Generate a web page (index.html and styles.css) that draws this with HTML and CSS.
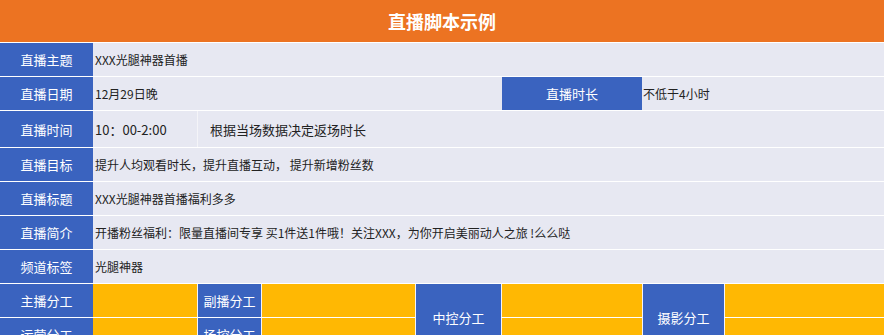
FILE: index.html
```html
<!DOCTYPE html>
<html lang="zh">
<head>
<meta charset="utf-8">
<title>直播脚本示例</title>
<link rel="stylesheet" href="styles.css">
</head>
<body>
<div class="sheet">
  <div class="title">直播脚本示例</div>
  <div class="rows">
    <div class="row">
      <div class="label">直播主题</div>
      <div class="val">XXX光腿神器首播</div>
    </div>
    <div class="row">
      <div class="label">直播日期</div>
      <div class="val w-date">12月29日晚</div>
      <div class="label w-dur">直播时长</div>
      <div class="val flush">不低于4小时</div>
    </div>
    <div class="row tall">
      <div class="label">直播时间</div>
      <div class="val w-time big">10：00-2:00</div>
      <div class="val line big pad">根据当场数据决定返场时长</div>
    </div>
    <div class="row">
      <div class="label">直播目标</div>
      <div class="val">提升人均观看时长，提升直播互动， 提升新增粉丝数</div>
    </div>
    <div class="row">
      <div class="label">直播标题</div>
      <div class="val">XXX光腿神器首播福利多多</div>
    </div>
    <div class="row">
      <div class="label">直播简介</div>
      <div class="val">开播粉丝福利：限量直播间专享 买1件送1件哦！关注XXX，为你开启美丽动人之旅 !么么哒</div>
    </div>
    <div class="row">
      <div class="label">频道标签</div>
      <div class="val">光腿神器</div>
    </div>
    <div class="roles">
      <div class="label">主播分工</div>
      <div class="yel"></div>
      <div class="label line">副播分工</div>
      <div class="yel line"></div>
      <div class="label line span2">中控分工</div>
      <div class="yel line"></div>
      <div class="label line span2">摄影分工</div>
      <div class="yel line"></div>
      <div class="label">运营分工</div>
      <div class="yel"></div>
      <div class="label line">场控分工</div>
      <div class="yel line"></div>
      <div class="yel line"></div>
      <div class="yel line"></div>
    </div>
  </div>
</div>
</body>
</html>
```

FILE: styles.css
```css
html, body {
  margin: 0;
  padding: 0;
  background: #ffffff;
  overflow: hidden;
}

body {
  font-family: "Noto Sans CJK SC", "Noto Sans", sans-serif;
  color: #222222;
}

.sheet {
  width: 884px;
  display: flex;
  flex-direction: column;
  gap: 1px;
}

.title {
  height: 42px;
  background: #ec7322;
  color: #ffffff;
  font-size: 18px;
  font-weight: 700;
  display: flex;
  align-items: center;
  justify-content: center;
}

.rows {
  display: flex;
  flex-direction: column;
  gap: 1px;
}

.row {
  display: flex;
  height: 33px;
}

.row.tall {
  height: 36px;
}

.label {
  box-sizing: border-box;
  width: 93px;
  flex: none;
  background: #3a63bf;
  color: #ffffff;
  font-size: 13px;
  display: flex;
  align-items: center;
  justify-content: center;
}

.val {
  box-sizing: border-box;
  flex: 1;
  min-width: 0;
  background: #e7e8f2;
  font-size: 12px;
  display: flex;
  align-items: center;
  padding-left: 2px;
  white-space: nowrap;
}

.val.big {
  font-size: 13px;
}

.val.pad {
  padding-left: 12px;
}

.val.flush {
  padding-left: 1px;
}

.w-date {
  flex: none;
  width: 409px;
}

.label.w-dur {
  width: 140px;
}

.w-time {
  flex: none;
  width: 104px;
}

.line {
  border-left: 1px solid #f4f4f8;
}

.roles {
  display: grid;
  grid-template-columns: 93px 104px 64px 154px 86px 141px 82px 1fr;
  grid-template-rows: 33px 33px;
  row-gap: 1px;
}

.roles .label {
  width: auto;
}

.roles .span2 {
  grid-row: span 2;
}

.yel {
  box-sizing: border-box;
  background: #ffb803;
}
```
